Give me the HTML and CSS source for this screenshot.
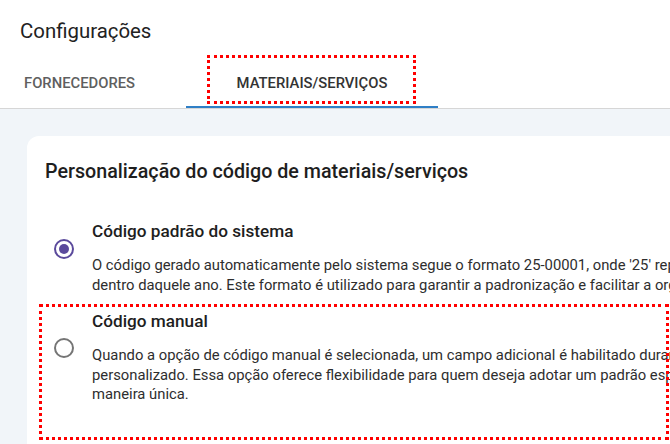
FILE: index.html
```html
<!DOCTYPE html>
<html lang="pt-BR">
<head>
    <meta charset="UTF-8">
    <meta name="viewport" content="width=device-width, initial-scale=1.0">
    <title>Configurações</title>
    <link rel="stylesheet" href="styles.css">
</head>
<body>
    <div class="header">
        <h1>Configurações</h1>
    </div>

    <div class="tabs">
        <div class="tab first">Fornecedores</div>
        <div class="tab active">Materiais/Serviços</div>
    </div>

    <div class="content">
        <div class="card">
            <h2>Personalização do código de materiais/serviços</h2>

            <div class="option">
                <span class="radio checked"></span>
                <div class="option-text">
                    <div class="option-title">Código padrão do sistema</div>
                    <p class="option-desc">O código gerado automaticamente pelo sistema segue o formato 25-00001, onde '25' representa o ano e '00001' o número sequencial<br>dentro daquele ano. Este formato é utilizado para garantir a padronização e facilitar a organização dos cadastros.</p>
                </div>
            </div>

            <div class="option second">
                <span class="radio"></span>
                <div class="option-text">
                    <div class="option-title">Código manual</div>
                    <p class="option-desc">Quando a opção de código manual é selecionada, um campo adicional é habilitado durante o cadastro para informar o código<br>personalizado. Essa opção oferece flexibilidade para quem deseja adotar um padrão específico e organizar os itens de<br>maneira única.</p>
                </div>
            </div>
        </div>
    </div>

    <!-- marcações da revisão -->
    <div class="mark mark-tab"></div>
    <div class="mark mark-option"></div>
</body>
</html>
```

FILE: styles.css
```css
body {
    font-family: Roboto, "Liberation Sans", Arial, sans-serif;
    margin: 0;
    width: 670px;
    height: 444px;
    overflow: hidden;
    position: relative;
    background: #fff;
    color: #212121;
}
.header {
    padding: 19px 20px 0;
}
h1 {
    margin: 0;
    font-size: 20.4px;
    font-weight: 400;
    line-height: 24px;
    color: #222;
}
.tabs {
    display: flex;
    margin-top: 17px;
    border-bottom: 1px solid #d6d6d6;
}
.tab {
    height: 46px;
    line-height: 46px;
    border-bottom: 2px solid transparent;
    font-size: 14.8px;
    font-weight: 500;
    text-transform: uppercase;
    color: #5f5f5f;
    white-space: nowrap;
}
.tab.first {
    width: 162px;
    padding-left: 24px;
}
.tab.active {
    width: 252px;
    text-align: center;
    color: #333;
    border-bottom-color: #2f7fc6;
}
.content {
    background: #f1f5f9;
    padding: 27px 0 0 27px;
    height: 400px;
}
.card {
    background: #fff;
    border-radius: 12px;
    width: 900px;
    height: 400px;
    padding: 24px 18px 0;
    box-sizing: border-box;
}
h2 {
    margin: 0 0 35px;
    font-size: 19.7px;
    font-weight: 500;
    line-height: 24px;
    color: #1e1e1e;
}
.option {
    display: flex;
    align-items: center;
}
.option.second {
    margin-top: 14px;
}
.radio {
    width: 20px;
    height: 20px;
    border: 2px solid #757575;
    border-radius: 50%;
    box-sizing: border-box;
    margin: 0 18px 17px 9px;
    flex-shrink: 0;
    position: relative;
}
.radio.checked {
    border-color: #5b4a9c;
}
.radio.checked::after {
    content: "";
    position: absolute;
    left: 3px;
    top: 3px;
    width: 10px;
    height: 10px;
    border-radius: 50%;
    background: #5b4a9c;
}
.option-title {
    font-size: 17.2px;
    font-weight: 500;
    line-height: 24px;
    color: #1e1e1e;
}
.option-desc {
    margin: 13px 0 0;
    font-size: 14.8px;
    line-height: 19.5px;
    color: #2e2e2e;
    white-space: nowrap;
}
.mark {
    position: absolute;
    border: 3px dotted #f00;
    box-sizing: border-box;
}
.mark-tab {
    left: 207px;
    top: 55px;
    width: 209px;
    height: 49px;
}
.mark-option {
    left: 39px;
    top: 304px;
    width: 630px;
    height: 136px;
}
```
